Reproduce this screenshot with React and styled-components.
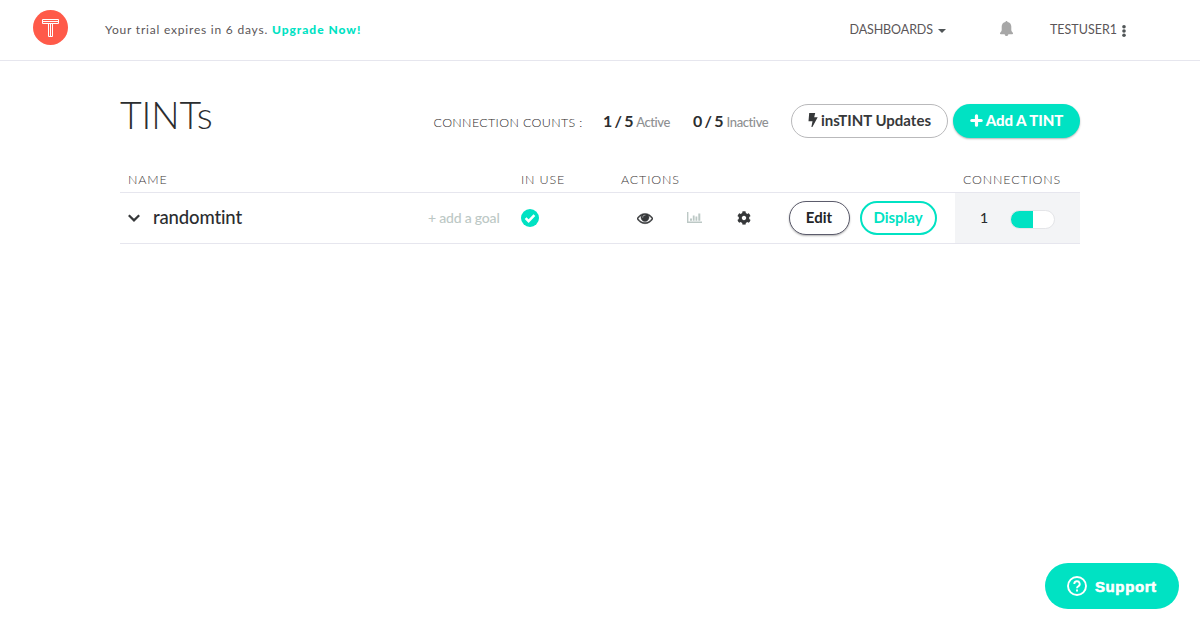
import React from "react";
import styled, { createGlobalStyle } from "styled-components";
import { FaCog } from "react-icons/fa";

const TEAL = "#00e2c3";
const LINE = "#e6e6ee";

const Global = createGlobalStyle`
  * { box-sizing: border-box; }
  body { margin: 0; background: #fff; font-family: Lato, "Liberation Sans", sans-serif; color: #2b2d2f; }
  svg { display: block; flex: none; }
`;

const Header = styled.header`
  height: 61px;
  display: flex;
  border-bottom: 1px solid ${LINE};
  padding: 0 74px 0 33px;
  color: #5b5658;
`;
const LogoLink = styled.div`padding-top: 10px; width: 72px;`;
const Trial = styled.div`
  font-size: 12px;
  line-height: 20px;
  padding-top: 20px;
  letter-spacing: 0.79px;
  flex: 1;
  white-space: nowrap;
`;
const Upgrade = styled.b`color: ${TEAL}; font-weight: 900; letter-spacing: 0.97px;`;
const NavItem = styled.div`
  display: flex;
  gap: ${(p) => p.$gap || 5}px;
  font-size: 12.5px;
  line-height: 20px;
  padding-top: 20px;
  margin-right: ${(p) => p.$after || 0}px;
  letter-spacing: ${(p) => p.$ls || "0"};
  white-space: nowrap;
`;
const NavIcon = styled.span`padding-top: ${(p) => p.$top}px;`;

const Main = styled.main`width: 960px; margin: 0 auto;`;
const TitleBar = styled.div`display: flex; height: 106px; padding-top: 33px;`;
const Title = styled.h1`
  margin: -1px 0 0;
  width: 313.5px;
  font-size: 37.5px;
  line-height: 44px;
  letter-spacing: -0.1px;
  font-weight: 300;
  white-space: nowrap;
`;
const CountsLabel = styled.div`
  width: 169.5px;
  padding-top: 19px;
  font-size: 12.5px;
  line-height: 20px;
  font-weight: 300;
  letter-spacing: 0.33px;
  white-space: nowrap;
  color: #2b2729;
`;
const Count = styled.div`
  width: ${(p) => p.$w}px;
  padding-top: 16px;
  line-height: 22px;
  font-size: 13px;
  font-weight: 500;
  letter-spacing: -0.4px;
  color: #8e9092;
  white-space: nowrap;
  b { font-size: 16px; color: #2b2d2f; letter-spacing: 0.1px; word-spacing: -1.8px; }
`;
const Pill = styled.button`
  display: flex;
  align-items: center;
  justify-content: center;
  gap: 3px;
  width: ${(p) => p.$w}px;
  height: 34px;
  margin: ${(p) => p.$margin || "0"};
  padding: 0 ${(p) => p.$nudge || 0}px 2px 0;
  border-radius: 17px;
  border: ${(p) => p.$border || "1px solid #b9b9bb"};
  background: ${(p) => p.$bg || "#fff"};
  color: ${(p) => p.$color || "#36383a"};
  box-shadow: ${(p) => p.$shadow || "none"};
  font-family: inherit;
  font-size: 15px;
  font-weight: ${(p) => p.$weight || 700};
  letter-spacing: ${(p) => p.$ls || "0"};
  white-space: nowrap;
`;

const Columns = styled.div`
  display: grid;
  grid-template-columns: 393px 100px 342px 125px;
  height: 26px;
  border-bottom: 1px solid ${LINE};
  font-size: 12.5px;
  font-weight: 300;
  line-height: 25px;
  letter-spacing: 0.82px;
  color: #3b3638;
  span { padding-left: 8px; }
`;
const Row = styled.div`
  display: flex;
  align-items: center;
  height: 51px;
  border-bottom: 1px solid ${LINE};
`;
const RowName = styled.div`
  width: 308px;
  padding-left: 8px;
  display: flex;
  align-items: center;
  gap: 13px;
  font-size: 18.5px;
  font-weight: 500;
  line-height: 24px;
  letter-spacing: -0.15px;
`;
const NameText = styled.span`padding-bottom: 3px;`;
const Goal = styled.div`
  width: 93px;
  padding-bottom: 2px;
  font-size: 14px;
  font-weight: 500;
  color: #bcc8c5;
  letter-spacing: -0.2px;
  white-space: nowrap;
`;
const Cell = styled.div`width: ${(p) => p.$w}px;`;
const Usage = styled.div`
  width: 125px;
  height: 50px;
  margin-left: auto;
  display: flex;
  align-items: center;
  padding-left: 25px;
  gap: 22px;
  background: #f3f4f6;
  font-size: 14px;
  font-weight: 500;
`;
const UsageCount = styled.span`padding-bottom: 1px;`;
const Toggle = styled.div`
  width: 45px;
  height: 19px;
  margin-top: 3px;
  border: 1px solid #e4e5e8;
  border-radius: 10px;
  background: linear-gradient(90deg, ${TEAL} 22px, #fff 22px);
`;
const Support = styled.button`
  position: fixed;
  left: 1045px;
  top: 563px;
  width: 134px;
  height: 46px;
  border: 0;
  border-radius: 23px;
  background: ${TEAL};
  color: #fff;
  display: flex;
  align-items: center;
  gap: 8px;
  padding: 0 0 0 22px;
  font: 700 15px "Liberation Sans", Arial, sans-serif;
  letter-spacing: 0.6px;
  -webkit-text-stroke: 0.6px #fff;
`;

const Logo = () => (
  <svg width="35" height="35" viewBox="0 0 35 35">
    <circle cx="17.5" cy="17.5" r="17.5" fill="#ff5a49" />
    <g fill="none" stroke="#fff">
      <path d="M9.5 9.5h16v4h-16zM9.5 11.5h16M15.5 13.5v13h4v-13M17.5 13.5v13" />
    </g>
  </svg>
);
const Bell = () => (
  <svg width="13" height="16" viewBox="0 0 13 16" fill="#a7a7a7">
    <path d="M6.500 0c.7 0 1 .5 1 1.100C9.900 1.600 11.300 3.400 11.300 5.600v3.200c0 1.200.5 1.800 1.300 2.600.8.800.5 1.800-.4 1.800H.8c-.9 0-1.200-1-.4-1.800.8-.8 1.300-1.400 1.300-2.600V5.600C1.700 3.400 3.100 1.600 5.500 1.100 5.500.5 5.800 0 6.500 0zM4.700 13.200h3.600c0 1.200-.8 1.800-1.800 1.800s-1.800-.6-1.800-1.800z" />
  </svg>
);
const Eye = () => (
  <svg width="16" height="16" viewBox="0 0 1792 1792" fill="#36383a" stroke="#36383a" strokeWidth="50">
    <path d="M1664 960q-152-236-381-353 61 104 61 225 0 185-131.500 316.500t-316.500 131.500-316.500-131.500-131.500-316.500q0-121 61-225-229 117-381 353 133 205 333.500 326.500t434.500 121.500 434.500-121.500 333.500-326.500zm-720-384q0-20-14-34t-34-14q-125 0-214.500 89.500t-89.500 214.500q0 20 14 34t34 14 34-14 14-34q0-86 61-147t147-61q20 0 34-14t14-34zm848 384q0 34-20 69-140 230-376.500 368.500t-499.500 138.500-499.500-139-376.500-368q-20-35-20-69t20-69q140-229 376.500-368t499.500-139 499.500 139 376.500 368q20 35 20 69z" />
  </svg>
);
const Bars = () => (
  <svg width="15" height="12" viewBox="0 0 15 12" fill="#bcc8c5">
    <path d="M0 0h1.400v9.600H15V11H0zM3 6.500h2v2.300H3zM5.800 3.500h1.800v5.300H5.800zM8.500 4.500h1.800v4.300H8.500zM11.300 1.500h2v7.300h-2z" />
  </svg>
);
const Bolt = () => (
  <svg width="10" height="14" viewBox="0 0 10 14" fill="currentColor">
    <path d="M1.200 0h6L6.200 4.200h3.500L4.400 14H3.400L4.500 8.200H.5z" />
  </svg>
);
const Plus = () => (
  <svg width="13" height="13" viewBox="0 0 13 13" fill="none" stroke="#fff" strokeWidth="3.200" strokeLinecap="round">
    <path d="M6.500 1.800v9.400M1.800 6.500h9.400" />
  </svg>
);
const Check = () => (
  <svg width="18" height="18" viewBox="0 0 18 18">
    <circle cx="9" cy="9" r="9" fill={TEAL} />
    <path d="M4.600 9.100l3 3 5.800-5.900" fill="none" stroke="#fff" strokeWidth="2.500" />
  </svg>
);

export default function App() {
  return (
    <>
      <Global />
      <Header>
        <LogoLink><Logo /></LogoLink>
        <Trial>Your trial expires in 6 days. <Upgrade>Upgrade Now!</Upgrade></Trial>
        <NavItem $after={54} $ls="-0.1px">
          DASHBOARDS
          <NavIcon $top={9}><svg width="8" height="4" viewBox="0 0 8 4" fill="#505557"><path d="M0 0h8L4 4z" /></svg></NavIcon>
        </NavItem>
        <NavItem $after={37}><NavIcon $top={1}><Bell /></NavIcon></NavItem>
        <NavItem>
          TESTUSER1
          <NavIcon $top={5}>
            <svg width="4" height="12" viewBox="0 0 4 12" fill="#505557"><circle cx="2" cy="1.800" r="1.800" /><circle cx="2" cy="6" r="1.800" /><circle cx="2" cy="10.200" r="1.800" /></svg>
          </NavIcon>
        </NavItem>
      </Header>
      <Main>
        <TitleBar>
          <Title>TINTs</Title>
          <CountsLabel>CONNECTION COUNTS :</CountsLabel>
          <Count $w={90}><b>1 / 5</b> Active</Count>
          <Count $w={98}><b>0 / 5</b> Inactive</Count>
          <Pill $w={157} $margin="10px 5px 0 0"><Bolt />insTINT Updates</Pill>
          <Pill $w={127} $margin="10px 0 0" $border="0" $bg={TEAL} $color="#fff" $weight={900} $ls="-0.05px" $shadow="0 1px 2px rgba(0,0,0,.3)"><Plus />Add A TINT</Pill>
        </TitleBar>
        <Columns><span>NAME</span><span>IN USE</span><span>ACTIONS</span><span>CONNECTIONS</span></Columns>
        <Row>
          <RowName>
            <svg width="12" height="8" viewBox="0 0 12 8" fill="none" stroke="#36383a" strokeWidth="2.200"><path d="M.8 1.200L6 6.400 11.200 1.200" /></svg>
            <NameText>randomtint</NameText>
          </RowName>
          <Goal>+ add a goal</Goal>
          <Cell $w={116}><Check /></Cell>
          <Cell $w={50}><Eye /></Cell>
          <Cell $w={50}><Bars /></Cell>
          <Cell $w={52}><FaCog size={14} color="#36383a" /></Cell>
          <Pill $w={61} $nudge={1} $border="1px solid #5c5c6c" $color="#222426" $shadow="0 1px 2px rgba(0,0,0,.3)">Edit</Pill>
          <Pill $w={77} $nudge={1} $margin="0 0 0 10px" $border={`2px solid ${TEAL}`} $color={TEAL}>Display</Pill>
          <Usage><UsageCount>1</UsageCount><Toggle /></Usage>
        </Row>
      </Main>
      <Support>
        <svg width="20" height="20" viewBox="0 0 20 20" fill="none" stroke="#fff" strokeWidth="1.900">
          <circle cx="10" cy="10" r="9" />
          <path d="M7.300 8a2.700 2.700 0 1 1 4 2.300c-.9.600-1.300 1-1.300 2M10 13.600v1.900" />
        </svg>
        Support
      </Support>
    </>
  );
}
